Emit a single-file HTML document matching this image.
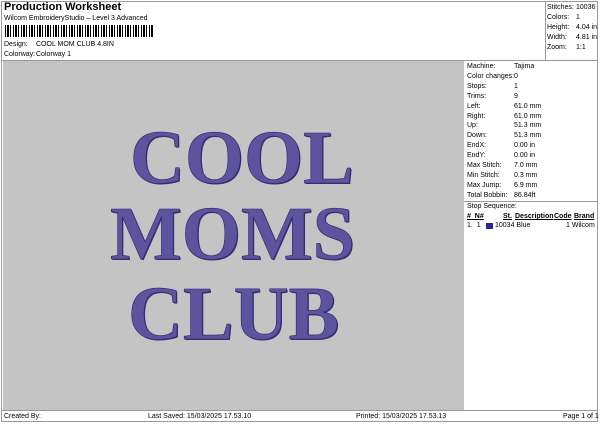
<!DOCTYPE html><html><head><style>
*{margin:0;padding:0;box-sizing:border-box}
body{width:600px;height:424px;background:#fff;position:relative;font-family:"Liberation Sans",sans-serif;color:#000;overflow:hidden}
.a{position:absolute;white-space:nowrap}
.s{font-size:7px}
.t{position:absolute;font-family:"Liberation Serif",serif;font-weight:bold;font-size:76px;line-height:1;color:#5d539f;-webkit-text-stroke:0.6px #2c2566;text-shadow:1px 1px 0 #3a3278}
</style></head><body>
<div class="a" style="left:1px;top:1px;width:597px;height:421px;border:1px solid #999"></div>
<div class="a" style="left:4px;top:1px;font-size:11px;font-weight:bold">Production Worksheet</div>
<div class="a s" style="left:4px;top:15px">Wilcom EmbroideryStudio – Level 3 Advanced</div>
<div class="a" style="left:5px;top:25px;width:149px;height:12px;background:repeating-linear-gradient(90deg,#000 0 1px,#fff 1px 2px,#000 2px 4px,#fff 4px 5px,#000 5px 6px,#fff 6px 8px)"></div>
<div class="a s" style="left:4px;top:41px">Design:</div><div class="a s" style="left:36px;top:41px">COOL MOM CLUB 4.8IN</div>
<div class="a s" style="left:4px;top:51px">Colorway:</div><div class="a s" style="left:36px;top:51px">Colorway 1</div>
<div class="a" style="left:545px;top:1px;width:1px;height:59px;background:#999"></div>
<div class="a" style="left:1px;top:60px;width:597px;height:1px;background:#999"></div>
<div class="a s" style="left:547px;top:3px;line-height:10px">Stitches:<br>Colors:<br>Height:<br>Width:<br>Zoom:</div>
<div class="a s" style="left:576px;top:3px;line-height:10px">10036<br>1<br>4.04 in<br>4.81 in<br>1:1</div>
<div class="a" style="left:3px;top:61px;width:461px;height:349px;background:#c4c4c4"></div>
<div class="a s" style="left:467px;top:62px;line-height:9.9px">Machine:<br>Color changes:<br>Stops:<br>Trims:<br>Left:<br>Right:<br>Up:<br>Down:<br>EndX:<br>EndY:<br>Max Stitch:<br>Min Stitch:<br>Max Jump:<br>Total Bobbin:</div>
<div class="a s" style="left:514px;top:62px;line-height:9.9px">Tajima<br>0<br>1<br>9<br>61.0 mm<br>61.0 mm<br>51.3 mm<br>51.3 mm<br>0.00 in<br>0.00 in<br>7.0 mm<br>0.3 mm<br>6.9 mm<br>86.84ft</div>
<div class="a" style="left:464px;top:201px;width:134px;height:1px;background:#999"></div>
<div class="a s" style="left:467px;top:203px">Stop Sequence:</div>
<div class="a s" style="left:467px;top:213px;font-weight:bold;text-decoration:underline">#&nbsp; N#</div>
<div class="a s" style="left:503px;top:213px;font-weight:bold;text-decoration:underline">St.</div>
<div class="a s" style="left:515px;top:213px;font-weight:bold;text-decoration:underline">Description</div>
<div class="a s" style="left:554px;top:213px;font-weight:bold;text-decoration:underline">Code</div>
<div class="a s" style="left:574px;top:213px;font-weight:bold;text-decoration:underline">Brand</div>
<div class="a s" style="left:467px;top:222px">1.&nbsp; 1</div>
<div class="a" style="left:486px;top:223px;width:7px;height:6px;background:#2a2a8a"></div>
<div class="a s" style="left:495px;top:222px">10034 Blue</div>
<div class="a s" style="left:566px;top:222px">1 Wilcom</div>
<div class="a" style="left:1px;top:410px;width:597px;height:1px;background:#999"></div>
<div class="a s" style="left:4px;top:413px">Created By:</div>
<div class="a s" style="left:148px;top:413px">Last Saved: 15/03/2025 17.53.10</div>
<div class="a s" style="left:356px;top:413px">Printed: 15/03/2025 17.53.13</div>
<div class="a s" style="left:563px;top:413px">Page 1 of 1</div>
<div class="t" style="left:130px;top:120px">COOL</div>
<div class="t" style="left:110px;top:196px">MOMS</div>
<div class="t" style="left:128px;top:276px">CLUB</div>
</body></html>
